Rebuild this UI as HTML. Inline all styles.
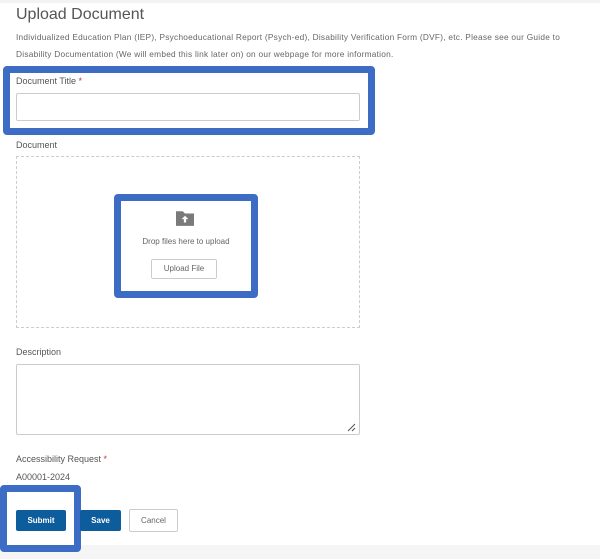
<!DOCTYPE html>
<html><head><style>
body{margin:0;width:600px;height:559px;background:#fff;position:relative;overflow:hidden;font-family:"Liberation Sans",sans-serif;color:#555}
.a{position:absolute}
.lbl{font-size:9px;color:#555}
.box{position:absolute;border:7px solid #3d6cc4;border-radius:4px;box-sizing:border-box}
.inp{position:absolute;border:1px solid #ccc;border-radius:2px;box-sizing:border-box;background:#fff}
.btn{position:absolute;box-sizing:border-box;font-size:8px;font-weight:bold;text-align:center;border-radius:2px}
</style></head><body>
<div class="a" style="left:0;top:0;width:600px;height:3px;background:#f3f3f3"></div>
<div class="a" style="left:16px;top:6px;font-size:16px;color:#555">Upload Document</div>
<div class="a" style="left:16px;top:29px;font-size:8.3px;line-height:17px;color:#666;width:590px;letter-spacing:0.25px">Individualized Education Plan (IEP), Psychoeducational Report (Psych-ed), Disability Verification Form (DVF), etc. Please see our Guide to<br>Disability Documentation (We will embed this link later on) on our webpage for more information.</div>

<div class="box" style="left:3px;top:66px;width:372px;height:69px"></div>
<div class="a lbl" style="left:16px;top:76px">Document Title <span style="color:#c33">*</span></div>
<div class="inp" style="left:16px;top:93px;width:344px;height:28px"></div>

<div class="a lbl" style="left:16px;top:140px">Document</div>
<div class="a" style="left:16px;top:156px;width:344px;height:172px;border:1px dashed #ccc;box-sizing:border-box"></div>
<div class="box" style="left:114px;top:194px;width:144px;height:104px"></div>
<svg class="a" style="left:176px;top:210px" width="18" height="16" viewBox="0 0 16 14"><path d="M0 1h6l2 2h8v11H0z" fill="#7a7a7a"/><path d="M8 5l-3 3h2v3h2V8h2z" fill="#fff"/></svg>
<div class="a" style="left:114px;top:237px;width:144px;text-align:center;font-size:8px;color:#666">Drop files here to upload</div>
<div class="btn" style="left:151px;top:259px;width:66px;height:20px;border:1px solid #ccc;color:#666;line-height:18px;font-weight:normal">Upload File</div>

<div class="a lbl" style="left:16px;top:347px">Description</div>
<div class="inp" style="left:16px;top:364px;width:344px;height:71px"></div>
<svg class="a" style="left:347px;top:423px" width="9" height="9"><path d="M1 8L8 1M5 8L8 5" stroke="#555" stroke-width="1"/></svg>

<div class="a lbl" style="left:16px;top:454px">Accessibility Request <span style="color:#c33">*</span></div>
<div class="a lbl" style="left:16px;top:472px">A00001-2024</div>

<div class="a" style="left:0;top:545px;width:600px;height:14px;background:#f5f5f5"></div>
<div class="box" style="left:0;top:485px;width:81px;height:67px"></div>
<div class="btn" style="left:16px;top:510px;width:50px;height:21px;background:#0d5c9c;color:#fff;line-height:21px">Submit</div>
<div class="btn" style="left:80px;top:510px;width:41px;height:21px;background:#0d5c9c;color:#fff;line-height:21px">Save</div>
<div class="btn" style="left:129px;top:509px;width:49px;height:23px;border:1px solid #ccc;background:#fff;color:#666;line-height:21px;font-weight:normal">Cancel</div>
</body></html>
